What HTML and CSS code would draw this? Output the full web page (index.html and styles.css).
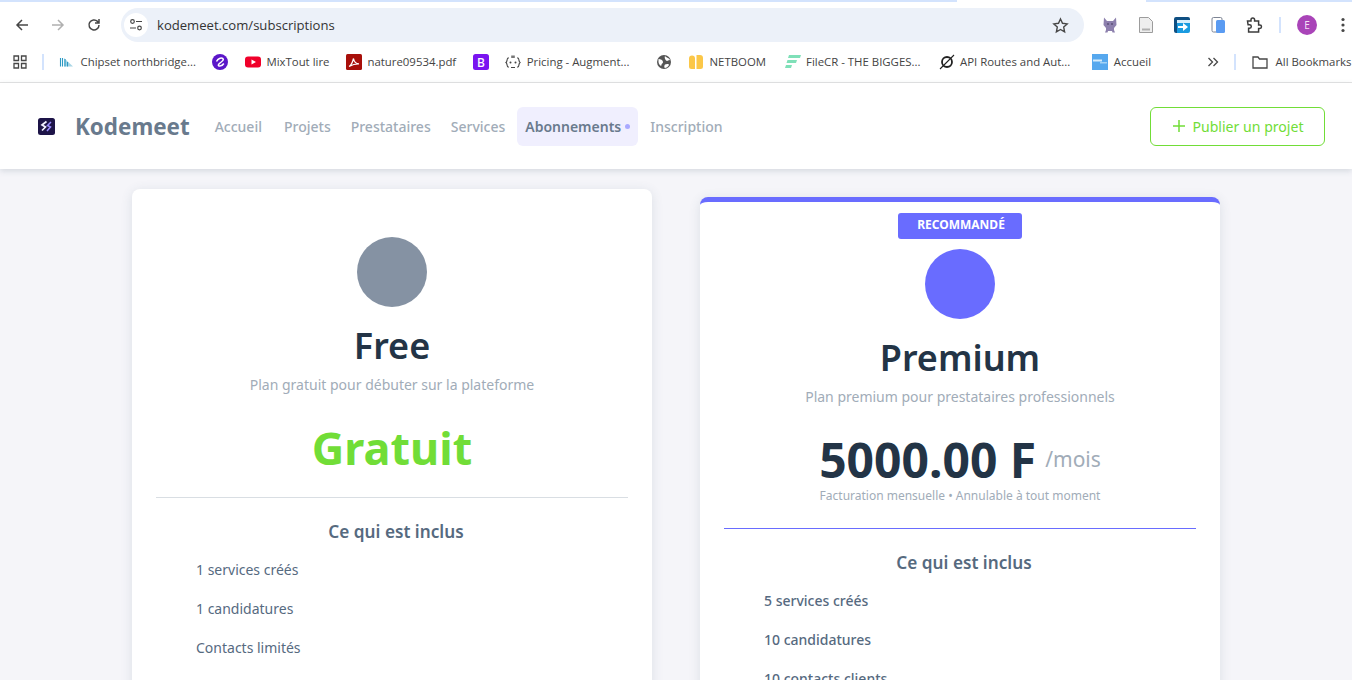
FILE: index.html
```html
<!DOCTYPE html>
<html lang="fr">
<head>
    <meta charset="UTF-8">
    <title>Abonnements - Kodemeet</title>
    <link rel="stylesheet" href="styles.css">
</head>
<body>
    <div class="browser">
        <span class="tab-gap"></span>
        <div class="toolbar">
            <svg class="tool-icon" viewBox="0 0 16 16"><path d="M14 8H3M8 3 3 8l5 5" fill="none" stroke="#474747" stroke-width="1.5"/></svg>
            <svg class="tool-icon" viewBox="0 0 16 16"><path d="M2 8h11M8 3l5 5-5 5" fill="none" stroke="#b0b0b0" stroke-width="1.5"/></svg>
            <svg class="tool-icon" viewBox="0 0 16 16"><path d="M13 8a5 5 0 1 1-1.500-3.600L13 6M13 2v4H9" fill="none" stroke="#474747" stroke-width="1.5"/></svg>
            <div class="omnibox">
                <span class="site-btn">
                    <svg width="14" height="14" viewBox="0 0 14 14"><circle cx="3.500" cy="3.500" r="1.800" fill="none" stroke="#474747" stroke-width="1.200"/><path d="M7 3.500h6M1 10h6" stroke="#474747" stroke-width="1.200"/><circle cx="10.500" cy="10" r="1.800" fill="none" stroke="#474747" stroke-width="1.200"/></svg>
                </span>
                <span class="url">kodemeet.com/subscriptions</span>
                <svg class="star" width="17" height="17" viewBox="0 0 17 17"><path d="m8.500 2 2 4.300 4.700.6-3.500 3.200.9 4.700-4.100-2.300-4.100 2.300.9-4.700L1.800 6.900l4.700-.6z" fill="none" stroke="#474747" stroke-width="1.400"/></svg>
            </div>
            <div class="extensions">
                <svg width="18" height="18" viewBox="0 0 18 18"><path d="M3 1.500 6 5h6l3-3.500.5 7.500-2.500 3v2l1 2.500h-2.500L11 15H7l-.5 1.500H4L5 14v-2L2.500 9z" fill="#8d80ad"/><circle cx="7" cy="8" r="1" fill="#5d5078"/><circle cx="11" cy="8" r="1" fill="#5d5078"/></svg>
                <svg width="18" height="18" viewBox="0 0 18 18"><path d="M2.500 1.500h9l4 4v11h-13z" fill="#eeeeee" stroke="#9c9c9c"/><path d="M5 12.500h8v2H5z" fill="#b0b0b0"/></svg>
                <svg width="18" height="18" viewBox="0 0 18 18"><path d="M1 3a2 2 0 0 1 2-2h12a2 2 0 0 1 2 2v1H4v13H3a2 2 0 0 1-2-2z" fill="#0f4f82"/><path d="M4 4h13v11a2 2 0 0 1-2 2H4z" fill="#1a9be0"/><path d="M4 4h13v3H4z" fill="#d8eefb"/><path d="M5 10h5V7l5 4-5 4v-3H5z" fill="#fff"/></svg>
                <svg width="18" height="18" viewBox="0 0 18 18"><rect x="3" y="1.500" width="10" height="14.500" rx="1.500" fill="#fff" stroke="#7d8494"/><rect x="7" y="4" width="9" height="13" rx="1.500" fill="#5a9bf2"/></svg>
                <svg width="18" height="18" viewBox="0 0 18 18"><path d="M2.500 5H6V3.800a1.800 1.800 0 0 1 3.600 0V5h4v4h1.200a1.700 1.700 0 0 1 0 3.400h-1.200V16h-10v-3.800h1a1.700 1.700 0 0 0 0-3.400h-1.500z" fill="none" stroke="#3c3c3c" stroke-width="1.500"/></svg>
            </div>
            <span class="tool-sep"></span>
            <span class="avatar">E</span>
            <svg class="dots" width="4" height="16" viewBox="0 0 4 16"><circle cx="2" cy="2.500" r="1.600" fill="#474747"/><circle cx="2" cy="8" r="1.600" fill="#474747"/><circle cx="2" cy="13.500" r="1.600" fill="#474747"/></svg>
        </div>
        <div class="bookmarks">
            <svg class="apps" width="14" height="14" viewBox="0 0 14 14"><path d="M1 1h4.500v4.500H1zM8.500 1H13v4.500H8.500zM1 8.500h4.500V13H1zM8.500 8.500H13V13H8.500z" fill="none" stroke="#474747" stroke-width="1.300"/></svg>
            <span class="bm-sep"></span>
            <a class="bm"><svg width="16" height="16" viewBox="0 0 16 16"><path d="M5 12.500V4l9 8.500z" fill="#a9d6e6"/><path d="M1.500 12.500V4M3.500 12.500V4M6 12.500V5M8.500 12.500V8" stroke="#2d9ac4" stroke-width="1.100"/></svg>Chipset northbridge...</a>
            <a class="bm"><svg width="16" height="16" viewBox="0 0 16 16"><circle cx="8" cy="8" r="8" fill="#5b16c9"/><path d="M4.500 7.500C6 4.500 9 3.500 10.800 4.500c1.500 1.200-.8 3-2.800 4.500s-2.500 3 0 3c1.300 0 2.800-.8 3.800-2.500" fill="none" stroke="#fff" stroke-width="1.500"/></svg></a>
            <a class="bm"><svg width="16" height="16" viewBox="0 0 16 16"><rect y="2.500" width="16" height="11" rx="3" fill="#f0002a"/><path d="M6.500 5.500 11 8l-4.500 2.500z" fill="#fff"/></svg>MixTout lire</a>
            <a class="bm"><svg width="16" height="16" viewBox="0 0 16 16"><rect width="16" height="16" rx="1.500" fill="#a80f0a"/><path d="M3 12.500c2-1 3.500-4 4.500-8 .5 3 2 5 5.500 5.500-3-.2-6 .5-10 2.500z" fill="none" stroke="#fff" stroke-width="1.200"/></svg>nature09534.pdf</a>
            <a class="bm"><svg width="16" height="16" viewBox="0 0 16 16"><rect width="16" height="16" rx="2.500" fill="#7a14f0"/><text x="8" y="12.500" class="bm-b">B</text></svg></a>
            <a class="bm bm-long"><svg width="16" height="16" viewBox="0 0 16 16"><path d="M4 4H3C1.800 4 2.500 7.500 1 8.500c1.500 1 .8 4.500 2 4.500h1M12 4h1c1.200 0 .5 3.500 2 4.500-1.500 1-.8 4.500-2 4.500h-1M6 13.500h4" fill="none" stroke="#444" stroke-width="1.100"/><circle cx="5.500" cy="8.500" r="1" fill="#444"/><circle cx="10.500" cy="8.500" r="1" fill="#444"/><rect x="6.200" y="1.500" width="3.600" height="2.500" fill="#777"/></svg>Pricing - Augment...</a>
            <a class="bm"><svg width="16" height="16" viewBox="0 0 16 16"><circle cx="8" cy="8" r="7" fill="#555"/><path d="M2.500 5c2 0 4.500 1 4.500 3s-1.500 1-1.500 3-3-.5-3-3zM9 2c1 2 3.500 1 5 4-2 0-2 1-3 1S8 4 9 2zM9 10.500c2-1 4-.5 4 .5-1 2-3 3-4 3s-1-2.500 0-3.500z" fill="#fff"/></svg></a>
            <a class="bm bm-netboom"><svg width="16" height="16" viewBox="0 0 16 16"><path d="M1 4.500a3 3 0 0 1 6 0V15H3.500A2.500 2.500 0 0 1 1 12.500zM8.500 1H12a3 3 0 0 1 3 3v8.500a2.500 2.500 0 0 1-2.500 2.500h-4z" fill="#fbc748"/></svg>NETBOOM</a>
            <a class="bm bm-filecr"><svg width="16" height="16" viewBox="0 0 16 16"><path d="M4 1h12l-1 3H3zM2.500 6H12l-1 3H1.500zM1 11h6l-1 3H0z" fill="#7fe0b8"/></svg>FileCR - THE BIGGES...</a>
            <a class="bm bm-api"><svg width="16" height="16" viewBox="0 0 16 16"><circle cx="8" cy="8" r="5" fill="none" stroke="#222" stroke-width="1.800"/><path d="M15 1 1 15" stroke="#222" stroke-width="1.100"/></svg>API Routes and Aut...</a>
            <a class="bm"><svg width="16" height="16" viewBox="0 0 16 16"><rect width="16" height="16" fill="#56a8ee"/><path d="M1 5.500h9v2H1z" fill="#d7ecfb"/><path d="M8 8h7v1.500H8z" fill="#a4d2f5"/></svg>Accueil</a>
            <svg class="more" width="12" height="10" viewBox="0 0 12 10"><path d="M1.500 1l4 4-4 4M6.500 1l4 4-4 4" fill="none" stroke="#474747" stroke-width="1.300"/></svg>
            <span class="bm-sep bm-sep-right"></span>
            <a class="bm bm-all"><svg width="16" height="14" viewBox="0 0 16 14"><path d="M1 2h5l1.500 2H15v9H1z" fill="none" stroke="#474747" stroke-width="1.300"/></svg>All Bookmarks</a>
        </div>
    </div>

    <nav class="navbar">
        <a class="brand">
            <svg class="brand-logo" width="17" height="17" viewBox="0 0 17 17"><rect width="17" height="17" rx="2.500" fill="#1d1448"/><path d="M8.500 3.500 4 7l3.500 2L4 12.500" fill="none" stroke="#f2f0ff" stroke-width="1.700"/><path d="M13 4 9.500 7.500l3 1.500L9 13" fill="none" stroke="#9b8cff" stroke-width="1.500"/></svg>
            <span class="brand-name">Kodemeet</span>
        </a>
        <div class="nav-links">
            <a class="first">Accueil</a>
            <a>Projets</a>
            <a>Prestataires</a>
            <a>Services</a>
            <a class="active">Abonnements<span class="active-dot"></span></a>
            <a>Inscription</a>
        </div>
        <a class="publish-btn"><svg class="plus" width="12" height="12" viewBox="0 0 12 12"><path d="M6 0v12M0 6h12" stroke="#71dd37" stroke-width="1.500"/></svg>Publier un projet</a>
    </nav>

    <main class="plans">
        <section class="plan">
            <div class="plan-circle grey"></div>
            <h2>Free</h2>
            <p class="plan-desc">Plan gratuit pour débuter sur la plateforme</p>
            <div class="price price-free">Gratuit</div>
            <hr>
            <h3>Ce qui est inclus</h3>
            <ul>
                <li>1 services créés</li>
                <li>1 candidatures</li>
                <li>Contacts limités</li>
            </ul>
        </section>

        <section class="plan plan-premium">
            <span class="badge">RECOMMANDÉ</span>
            <div class="plan-circle"></div>
            <h2>Premium</h2>
            <p class="plan-desc">Plan premium pour prestataires professionnels</p>
            <div class="price">5000.00 F<small>/mois</small></div>
            <p class="billing">Facturation mensuelle • Annulable à tout moment</p>
            <hr>
            <h3>Ce qui est inclus</h3>
            <ul>
                <li>5 services créés</li>
                <li>10 candidatures</li>
                <li>10 contacts clients</li>
            </ul>
        </section>
    </main>
</body>
</html>
```

FILE: styles.css
```css
* {
    box-sizing: border-box;
}
html, body {
    height: 680px;
    overflow: hidden;
}
body {
    margin: 0;
    background-color: #f5f5f9;
    font-family: "Noto Sans", "Open Sans", sans-serif;
    color: #566a7f;
}

/* barre du navigateur */
.browser {
    position: relative;
    background-color: #fff;
    border-top: 2px solid #d3e3fd;
    border-bottom: 1px solid #e3e3e3;
    height: 83px;
}
.tab-gap {
    position: absolute;
    top: -2px;
    left: 957px;
    width: 189px;
    height: 2px;
    background-color: #fff;
}
.toolbar {
    display: flex;
    align-items: center;
    height: 43px;
    padding: 3px 0 0 14px;
}
.tool-icon {
    width: 16px;
    height: 16px;
    margin-right: 20px;
}
.tool-icon:nth-of-type(3) {
    margin-right: 19px;
}
.omnibox {
    display: flex;
    align-items: center;
    width: 963px;
    height: 34px;
    border-radius: 17px;
    background-color: #ecf1f9;
    padding: 0 15px 0 3px;
}
.site-btn {
    display: flex;
    justify-content: center;
    align-items: center;
    width: 24px;
    height: 24px;
    border-radius: 50%;
    background-color: #fff;
    margin-right: 9px;
}
.url {
    flex: 1;
    font-family: "Open Sans", sans-serif;
    font-size: 13.1px;
    color: #333;
}
.extensions {
    display: flex;
    gap: 18px;
    margin-left: 17px;
}
.tool-sep {
    width: 2px;
    height: 16px;
    background-color: #d3e3fd;
    margin: 0 16px 0 16px;
}
.avatar {
    display: flex;
    justify-content: center;
    align-items: center;
    width: 20px;
    height: 20px;
    border-radius: 50%;
    background-color: #a944b8;
    color: #f3dff6;
    font-size: 10px;
    margin-right: 24px;
}
.bookmarks {
    display: flex;
    align-items: center;
    height: 32px;
    font-family: "Open Sans", sans-serif;
    font-size: 11.4px;
    color: #444;
    padding-left: 13px;
    white-space: nowrap;
}
.bookmarks svg, .bm-sep {
    margin-top: 2px;
}
.apps {
    flex: none;
}
.bm-sep {
    flex: none;
    width: 2px;
    height: 16px;
    background-color: #d3e3fd;
    margin-left: 15px;
    margin-right: 15px;
}
.bm {
    display: flex;
    align-items: center;
    gap: 5.5px;
    margin-right: 16.5px;
}
.bm svg {
    flex: none;
}
.bm-long {
    margin-right: 26px;
}
.bm-netboom {
    margin-right: 18.5px;
}
.bm-filecr {
    margin-right: 18.5px;
}
.bm-api {
    margin-right: 22px;
    gap: 5px;
}
.bm-b {
    font-family: "Noto Sans", sans-serif;
    font-size: 12px;
    font-weight: 500;
    fill: #fff;
    text-anchor: middle;
}
.more {
    margin-left: 39px;
    flex: none;
}
.bm-sep-right {
    margin-left: 15px;
    margin-right: 16px;
}
.bm-all {
    margin-right: 0;
    gap: 8px;
}

/* menu du site */
.navbar {
    position: relative;
    display: flex;
    align-items: center;
    height: 86px;
    background-color: #fff;
    box-shadow: 0 2px 6px rgba(67, 89, 113, 0.18);
    padding: 0 27px 0 38px;
}
.brand {
    display: flex;
    align-items: center;
}
.brand-name {
    font-size: 22.4px;
    font-weight: 700;
    color: #697a8d;
    margin-left: 20px;
}
.nav-links {
    display: flex;
    align-items: center;
    margin-left: 17px;
    flex: 1;
    font-size: 14px;
    font-weight: 500;
    color: #a1acb8;
}
.nav-links a {
    display: flex;
    align-items: center;
    height: 39px;
    padding: 0 8px;
    margin-right: 4px;
    border-radius: 6px;
}
.nav-links .first {
    padding-right: 10px;
}
.nav-links .active {
    background-color: #f0effe;
    color: #697a8d;
    font-weight: 600;
}
.active-dot {
    width: 5px;
    height: 5px;
    border-radius: 50%;
    background-color: #a9a9ff;
    margin-left: 4px;
}
.publish-btn {
    display: flex;
    align-items: center;
    justify-content: center;
    width: 175px;
    height: 39px;
    padding-left: 2px;
    border: 1px solid #71dd37;
    border-radius: 6px;
    color: #71dd37;
    font-size: 14.1px;
}
.plus {
    margin-right: 7px;
}

/* cartes des plans */
.plans {
    display: flex;
    justify-content: center;
    align-items: flex-start;
    gap: 48px;
    padding-top: 20px;
}
.plan {
    position: relative;
    width: 520px;
    height: 700px;
    padding: 48px 24px 24px;
    background-color: #fff;
    border-radius: 8px;
    box-shadow: 0 2px 12px rgba(67, 89, 113, 0.14);
    text-align: center;
}
.plan-premium {
    margin-top: 8px;
    padding-top: 47px;
    border-top: 5px solid #696cff;
}
.badge {
    position: absolute;
    top: 11px;
    left: 198px;
    width: 124px;
    height: 26px;
    line-height: 23px;
    padding-left: 2px;
    background-color: #696cff;
    color: #fff;
    font-size: 12px;
    font-weight: 700;
    border-radius: 3px;
}
.plan-circle {
    width: 70px;
    height: 70px;
    border-radius: 50%;
    background-color: #696cff;
    margin: 0 auto;
}
.plan-circle.grey {
    background-color: #8592a3;
}
.plan h2 {
    margin: 15px 0 0;
    font-size: 36px;
    line-height: 48px;
    font-weight: 600;
    color: #233446;
}
.plan-desc {
    margin: 5px 0 0;
    font-size: 14px;
    line-height: 20px;
    color: #a1acb8;
}
.price {
    display: flex;
    justify-content: center;
    align-items: center;
    margin-top: 25px;
    font-size: 48px;
    line-height: 55px;
    font-weight: 700;
    color: #233446;
}
.price-free {
    font-size: 45px;
    color: #71dd37;
}
.price small {
    margin-left: 9px;
    font-size: 21px;
    font-weight: 400;
    color: #a1acb8;
}
.billing {
    margin: 0;
    font-size: 12px;
    line-height: 18px;
    color: #a1acb8;
}
.plan hr {
    border: 0;
    height: 1px;
    background-color: #d9dee3;
    margin: 22px 0 0;
}
.plan-premium hr {
    background-color: #696cff;
    margin-top: 23px;
}
.plan h3 {
    margin: 22px 0 0;
    padding-left: 8px;
    font-size: 17.2px;
    line-height: 24px;
    font-weight: 600;
}
.plan ul {
    list-style: none;
    margin: 16px 0 0;
    padding: 0 0 0 40px;
    text-align: left;
    font-size: 14px;
}
.plan li {
    height: 39px;
    line-height: 20px;
}
.plan-premium li {
    font-weight: 500;
}
```
